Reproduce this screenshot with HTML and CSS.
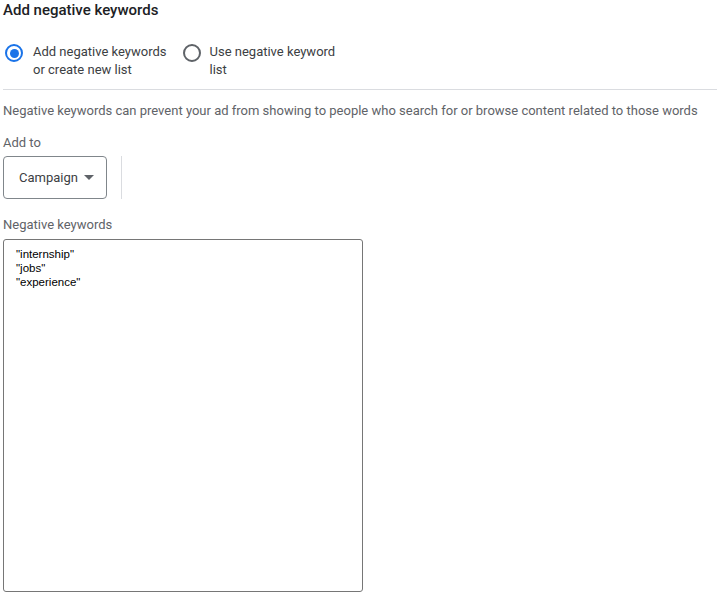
FILE: index.html
```html
<!DOCTYPE html>
<html>
<head>
<meta charset="utf-8">
<link rel="stylesheet" href="styles.css">
</head>
<body>
<div class="panel">
  <h1 class="title">Add negative keywords</h1>
  <div class="radios">
    <label class="radio">
      <span class="radio-icon on"><span class="dot"></span></span>
      <span class="radio-text">Add negative keywords<br>or create new list</span>
    </label>
    <label class="radio">
      <span class="radio-icon"></span>
      <span class="radio-text">Use negative keyword<br>list</span>
    </label>
  </div>
  <div class="divider"></div>
  <p class="desc">Negative keywords can prevent your ad from showing to people who search for or browse content related to those words</p>
  <div class="label">Add to</div>
  <div class="addto">
    <div class="select">Campaign <span class="caret"></span></div>
    <div class="vline"></div>
  </div>
  <div class="label kw-label">Negative keywords</div>
  <div class="textarea">"internship"<br>"jobs"<br>"experience"</div>
</div>
</body>
</html>
```
FILE: styles.css
```css
html, body { margin: 0; padding: 0; background: #fff; }
body { font-family: Roboto, "Liberation Sans", Arial, sans-serif; color: #3c4043; }
.panel { padding: 0 0 0 3px; }
.title { margin: 0; padding-top: 1px; font-size: 15px; font-weight: 500; color: #202124; line-height: 18px; height: 18px; }
.radios { display: flex; gap: 16px; margin-top: 24px; padding-left: 2px; }
.radio { display: flex; align-items: flex-start; gap: 10px; }
.radio-icon { box-sizing: border-box; width: 18px; height: 18px; border: 2px solid #5f6368; border-radius: 50%; display: flex; align-items: center; justify-content: center; margin-top: 1px; }
.radio-icon.on { border-color: #1a73e8; }
.dot { width: 9px; height: 9px; border-radius: 50%; background: #1a73e8; }
.radio-text { font-size: 13px; line-height: 18px; color: #3c4043; }
.radio + .radio { gap: 9px; }
.divider { height: 1px; background: #dadce0; margin-top: 10px; }
.desc { margin: 12px 0 0; font-size: 13px; line-height: 18px; color: #5f6368; white-space: nowrap; }
.label { margin-top: 14px; font-size: 13px; line-height: 18px; color: #5f6368; }
.addto { display: flex; align-items: stretch; gap: 14px; margin-top: 4px; }
.select { box-sizing: border-box; width: 104px; height: 43px; border: 1px solid #80868b; border-radius: 4px; display: flex; align-items: center; padding-left: 15px; font-size: 13px; color: #3c4043; gap: 6px; }
.caret { width: 0; height: 0; border-left: 5px solid transparent; border-right: 5px solid transparent; border-top: 5px solid #5f6368; }
.vline { width: 1px; background: #dadce0; }
.kw-label { margin-top: 17px; }
.textarea { box-sizing: border-box; width: 360px; height: 353px; margin-top: 5px; border: 1px solid #767676; border-radius: 3px; padding: 7px 12px; font-family: "Liberation Sans", Arial, sans-serif; font-size: 11.5px; line-height: 14px; color: #000; }
```
